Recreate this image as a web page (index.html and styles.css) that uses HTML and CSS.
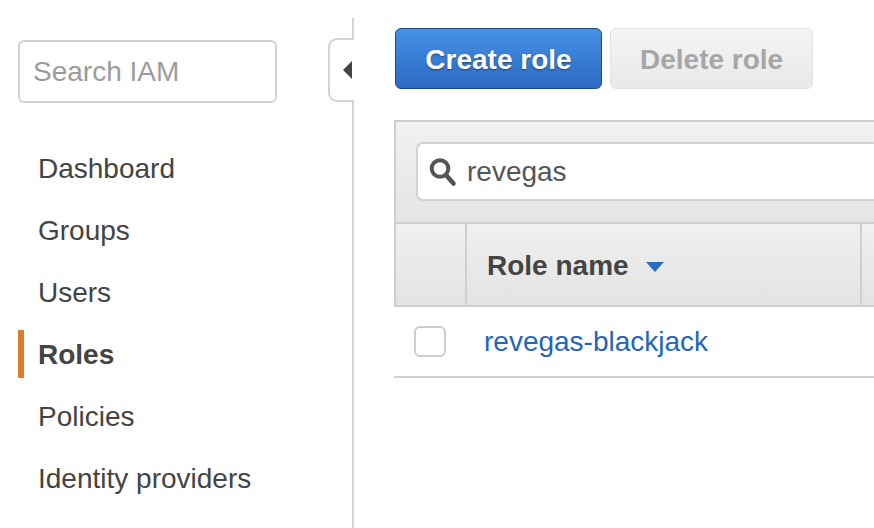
FILE: index.html
```html
<!DOCTYPE html>
<html>
<head>
<meta charset="utf-8">
<link rel="stylesheet" href="styles.css">
</head>
<body>
<div class="page">
  <aside class="sidebar">
    <div class="search-iam">Search IAM</div>
    <nav class="nav">
      <div class="nav-item">Dashboard</div>
      <div class="nav-item">Groups</div>
      <div class="nav-item">Users</div>
      <div class="nav-item active">Roles</div>
      <div class="nav-item">Policies</div>
      <div class="nav-item">Identity providers</div>
    </nav>
    <div class="collapse-tab"><span class="arrow-left"></span></div>
  </aside>
  <main class="main">
    <div class="actions">
      <button class="btn btn-primary">Create role</button>
      <button class="btn btn-disabled">Delete role</button>
    </div>
    <div class="panel">
      <div class="filter">
        <div class="filter-field">
          <svg class="mag" width="28" height="30" viewBox="0 0 28 30">
            <circle cx="11" cy="11.5" r="8.3" fill="none" stroke="#555" stroke-width="4"/>
            <line x1="17" y1="18" x2="24.5" y2="26.5" stroke="#555" stroke-width="4.6" stroke-linecap="round"/>
          </svg>
          <span class="filter-text">revegas</span>
        </div>
      </div>
      <div class="thead">
        <div class="th th-check"></div>
        <div class="th th-name">Role name <span class="caret"></span></div>
        <div class="th th-rest"></div>
      </div>
      <div class="trow">
        <div class="td td-check"><span class="checkbox"></span></div>
        <div class="td td-name"><a class="role-link">revegas-blackjack</a></div>
      </div>
    </div>
  </main>
</div>
</body>
</html>
```

FILE: styles.css
```css
html, body {
  margin: 0;
  padding: 0;
  background: #fff;
  overflow: hidden;
  font-family: "Liberation Sans", Arial, Helvetica, sans-serif;
}

.page {
  display: flex;
  width: 874px;
  height: 528px;
  overflow: hidden;
}

.sidebar {
  position: relative;
  flex: 0 0 354px;
  margin-top: 18px;
  border-right: 2px solid #d4d4d4;
  padding: 22px 0 0 18px;
  box-sizing: border-box;
  height: 510px;
}

.search-iam {
  width: 259px;
  height: 63px;
  box-sizing: border-box;
  border: 2px solid #d2d2d2;
  border-radius: 6px;
  padding-left: 13px;
  display: flex;
  align-items: center;
  font-size: 28px;
  color: #9b9b9b;
}

.nav {
  margin-top: 35px;
  display: flex;
  flex-direction: column;
}

.nav-item {
  position: relative;
  height: 62px;
  line-height: 62px;
  padding-left: 20px;
  font-size: 28px;
  color: #444;
}

.nav-item.active {
  font-weight: bold;
}

.nav-item.active::before {
  content: "";
  position: absolute;
  left: 0;
  top: 6px;
  width: 6px;
  height: 48px;
  background: #dd7c2d;
}

.collapse-tab {
  position: absolute;
  left: 328px;
  right: -2px;
  top: 20px;
  height: 64px;
  box-sizing: border-box;
  background: #fff;
  border: 2px solid #d4d4d4;
  border-right: none;
  border-radius: 9px 0 0 9px;
  display: flex;
  align-items: center;
  justify-content: flex-end;
  padding-right: 2px;
}

.arrow-left {
  width: 0;
  height: 0;
  border-top: 9px solid transparent;
  border-bottom: 9px solid transparent;
  border-right: 9px solid #444;
}

.main {
  flex: 1 1 auto;
  padding: 28px 0 0 41px;
  overflow: hidden;
}

.actions {
  display: flex;
  gap: 8px;
}

.btn {
  height: 61px;
  box-sizing: border-box;
  padding: 3px 29px 0;
  border-radius: 6px;
  font-family: "Liberation Sans", Arial, Helvetica, sans-serif;
  font-size: 28px;
  font-weight: bold;
  white-space: nowrap;
}

.btn-primary {
  width: 207px;
  color: #fff;
  border: 1px solid #1d4a86;
  background: linear-gradient(#4692e6, #2c69c3);
  text-shadow: 0 1px 2px rgba(0, 0, 0, 0.45);
}

.btn-disabled {
  width: 203px;
  color: #a6a6a6;
  border: 1px solid #e2e2e2;
  background: linear-gradient(#f4f4f4, #e9e9e9);
}

.panel {
  margin-top: 31px;
  width: 640px;
  margin-left: -1px;
}

.filter {
  height: 102px;
  box-sizing: border-box;
  border-top: 2px solid #cfcfcf;
  border-left: 2px solid #cfcfcf;
  background: linear-gradient(#f1f1f1, #e4e4e4);
  padding: 20px 0 0 20px;
}

.filter-field {
  height: 59px;
  box-sizing: border-box;
  background: #fff;
  border: 2px solid #d2d2d2;
  border-right: none;
  border-radius: 7px 0 0 7px;
  display: flex;
  align-items: center;
  padding-left: 11px;
  gap: 10px;
}

.mag {
  display: block;
  margin-top: 1px;
}

.filter-text {
  font-size: 28px;
  color: #555;
}

.thead {
  display: grid;
  grid-template-columns: 71px 395px 1fr;
  height: 85px;
  box-sizing: border-box;
  border-top: 2px solid #cfcfcf;
  border-bottom: 2px solid #cfcfcf;
  border-left: 2px solid #cfcfcf;
  background: linear-gradient(#f0f0f0, #e3e3e3);
}

.th {
  display: flex;
  align-items: center;
}

.th-check,
.th-name {
  border-right: 2px solid #cfcfcf;
}

.th-name {
  padding: 3px 0 0 20px;
  font-size: 28px;
  font-weight: bold;
  color: #444;
}

.caret {
  display: inline-block;
  margin-left: 17px;
  margin-top: 2px;
  width: 0;
  height: 0;
  border-left: 9px solid transparent;
  border-right: 9px solid transparent;
  border-top: 10px solid #2a6cc2;
}

.trow {
  display: grid;
  grid-template-columns: 73px 1fr;
  height: 71px;
  box-sizing: border-box;
  border-bottom: 2px solid #d2d2d2;
  align-items: center;
}

.td-check {
  padding-left: 20px;
  display: flex;
  align-items: center;
}

.checkbox {
  display: block;
  width: 32px;
  height: 31px;
  box-sizing: border-box;
  border: 2px solid #cdcdcd;
  border-radius: 6px;
  background: #fff;
}

.td-name {
  padding-left: 17px;
}

.role-link {
  font-size: 28px;
  color: #2366b9;
  text-decoration: none;
}
```
